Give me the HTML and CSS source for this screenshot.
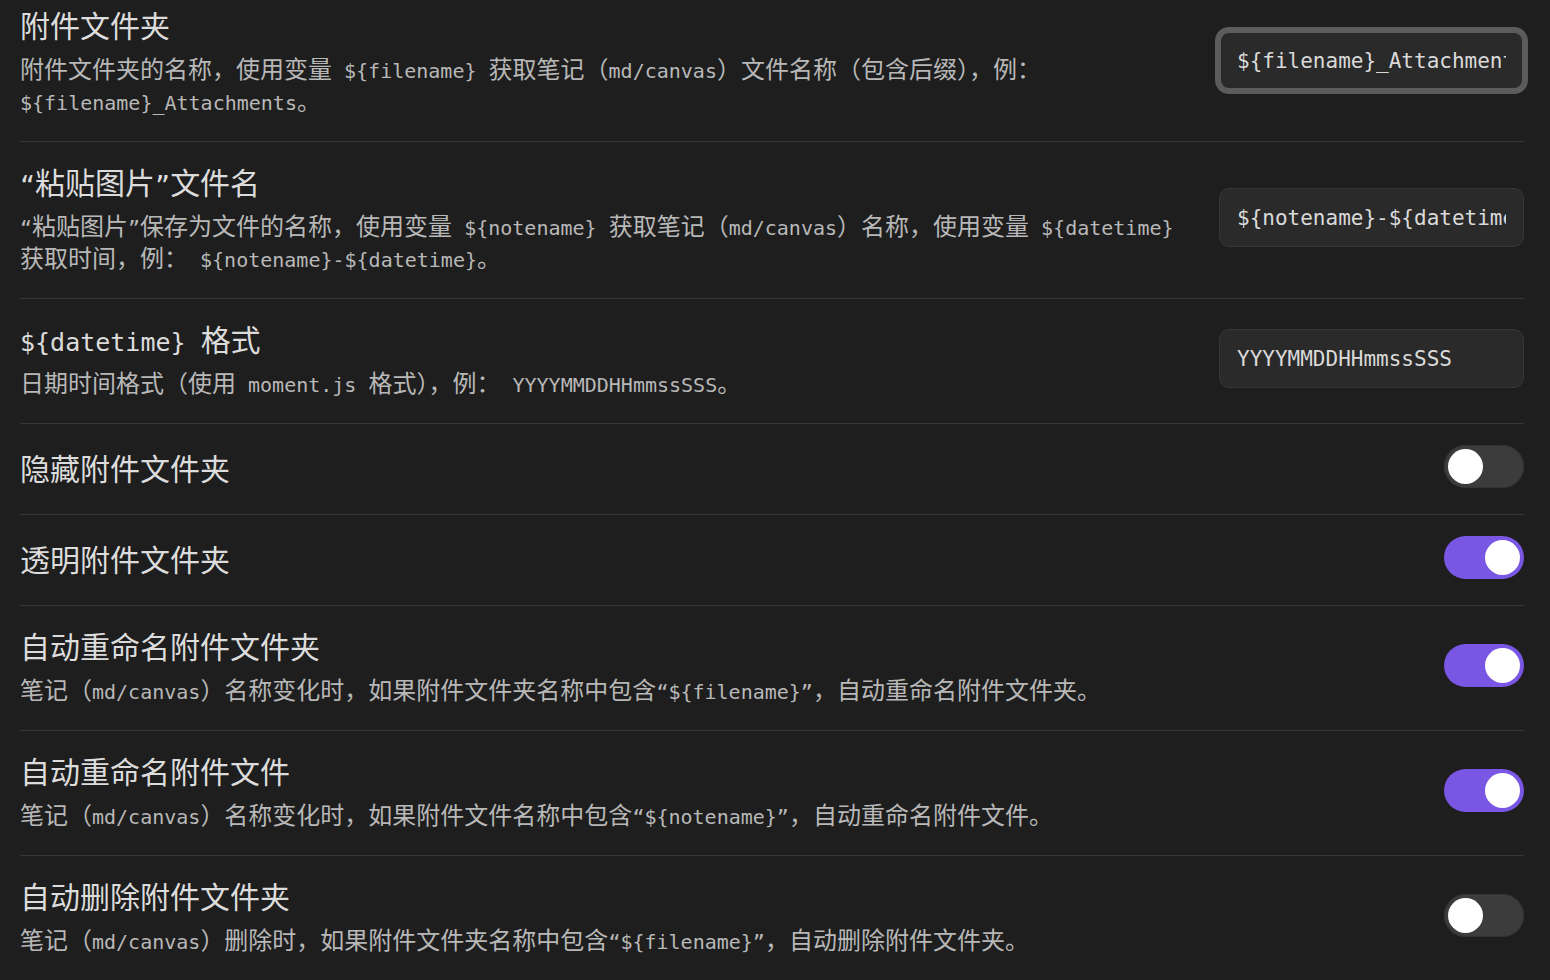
FILE: index.html
```html
<!DOCTYPE html>
<html>
	<head>
		<meta charset="utf-8">
		<title>附件设置</title>
		<link rel="stylesheet" href="styles.css">
	</head>
	<body>
		<div class="settings">
			<div class="setting">
				<div class="info">
					<div class="name">附件文件夹</div>
					<div class="desc">附件文件夹的名称，使用变量<span class="m"> ${filename} </span>获取笔记（<span class="m">md/canvas</span>）文件名称（包含后缀），例：<span class="m"> ${filename}_Attachments</span>。</div>
				</div>
				<div class="control">
					<input type="text" class="field focused" value="${filename}_Attachments">
				</div>
			</div>
			<div class="setting">
				<div class="info">
					<div class="name"><span class="m">“</span>粘贴图片<span class="m">”</span>文件名</div>
					<div class="desc"><span class="m">“</span>粘贴图片<span class="m">”</span>保存为文件的名称，使用变量<span class="m"> ${notename} </span>获取笔记（<span class="m">md/canvas</span>）名称，使用变量<span class="m"> ${datetime} </span>获取时间，例：<span class="m"> ${notename}-${datetime}</span>。</div>
				</div>
				<div class="control">
					<input type="text" class="field" value="${notename}-${datetime}">
				</div>
			</div>
			<div class="setting">
				<div class="info">
					<div class="name"><span class="m">${datetime} </span>格式</div>
					<div class="desc">日期时间格式（使用<span class="m"> moment.js </span>格式），例：<span class="m"> YYYYMMDDHHmmssSSS</span>。</div>
				</div>
				<div class="control">
					<input type="text" class="field" value="YYYYMMDDHHmmssSSS">
				</div>
			</div>
			<div class="setting">
				<div class="info">
					<div class="name">隐藏附件文件夹</div>
				</div>
				<div class="control">
					<div class="toggle"><div class="knob"></div></div>
				</div>
			</div>
			<div class="setting">
				<div class="info">
					<div class="name">透明附件文件夹</div>
				</div>
				<div class="control">
					<div class="toggle on"><div class="knob"></div></div>
				</div>
			</div>
			<div class="setting">
				<div class="info">
					<div class="name">自动重命名附件文件夹</div>
					<div class="desc">笔记（<span class="m">md/canvas</span>）名称变化时，如果附件文件夹名称中包含<span class="m">“${filename}”</span>，自动重命名附件文件夹。</div>
				</div>
				<div class="control">
					<div class="toggle on"><div class="knob"></div></div>
				</div>
			</div>
			<div class="setting">
				<div class="info">
					<div class="name">自动重命名附件文件</div>
					<div class="desc">笔记（<span class="m">md/canvas</span>）名称变化时，如果附件文件名称中包含<span class="m">“${notename}”</span>，自动重命名附件文件。</div>
				</div>
				<div class="control">
					<div class="toggle on"><div class="knob"></div></div>
				</div>
			</div>
			<div class="setting">
				<div class="info">
					<div class="name">自动删除附件文件夹</div>
					<div class="desc">笔记（<span class="m">md/canvas</span>）删除时，如果附件文件夹名称中包含<span class="m">“${filename}”</span>，自动删除附件文件夹。</div>
				</div>
				<div class="control">
					<div class="toggle"><div class="knob"></div></div>
				</div>
			</div>
		</div>
	</body>
</html>
```

FILE: styles.css
```css
html, body {
	margin: 0;
	height: 100%;
	overflow: hidden;
	background-color: #1e1e1e;
}

body {
	font-family: "Noto Sans CJK SC", sans-serif;
	color: #dadada;
}

.settings {
	width: 1504px;
	padding-left: 20px;
}

.setting {
	display: flex;
	align-items: center;
	padding: 20px 0 25px;
	border-top: 1px solid #363636;
}

.setting:first-child {
	border-top: none;
	padding-top: 5px;
}

.info {
	flex: 1;
	margin-right: 20px;
}

.name {
	font-size: 30px;
	line-height: 38px;
	color: #dcdcdc;
}

.name .m {
	font-size: 25px;
}

.desc {
	margin-top: 9px;
	font-size: 24px;
	line-height: 32px;
	color: #b8b8b8;
}

.m {
	font-family: "DejaVu Sans Mono", monospace;
	font-size: 20px;
	line-height: 1;
	white-space: pre-wrap;
}

.control {
	flex: none;
	display: flex;
	justify-content: flex-end;
}

.field {
	box-sizing: border-box;
	width: 305px;
	height: 59px;
	padding: 0 17px;
	border: 1px solid #363636;
	border-radius: 10px;
	outline: none;
	background-color: #2a2a2a;
	color: #dadada;
	font-family: "DejaVu Sans Mono", monospace;
	font-size: 21px;
}

.field.focused {
	border: 2px solid #5c5c5c;
	padding: 0 16px;
	box-shadow: 0 0 0 4px #5c5c5c;
}

.toggle {
	box-sizing: border-box;
	width: 80px;
	height: 43px;
	padding: 4px;
	border-radius: 22px;
	background-color: #3c3c3c;
	box-shadow: inset 0 0 0 1px #333333;
	display: flex;
	margin: 1px 0;
}

.toggle.on {
	background-color: #7956e3;
	box-shadow: none;
	justify-content: flex-end;
}

.knob {
	width: 35px;
	height: 35px;
	border-radius: 50%;
	background-color: #ffffff;
}
```
